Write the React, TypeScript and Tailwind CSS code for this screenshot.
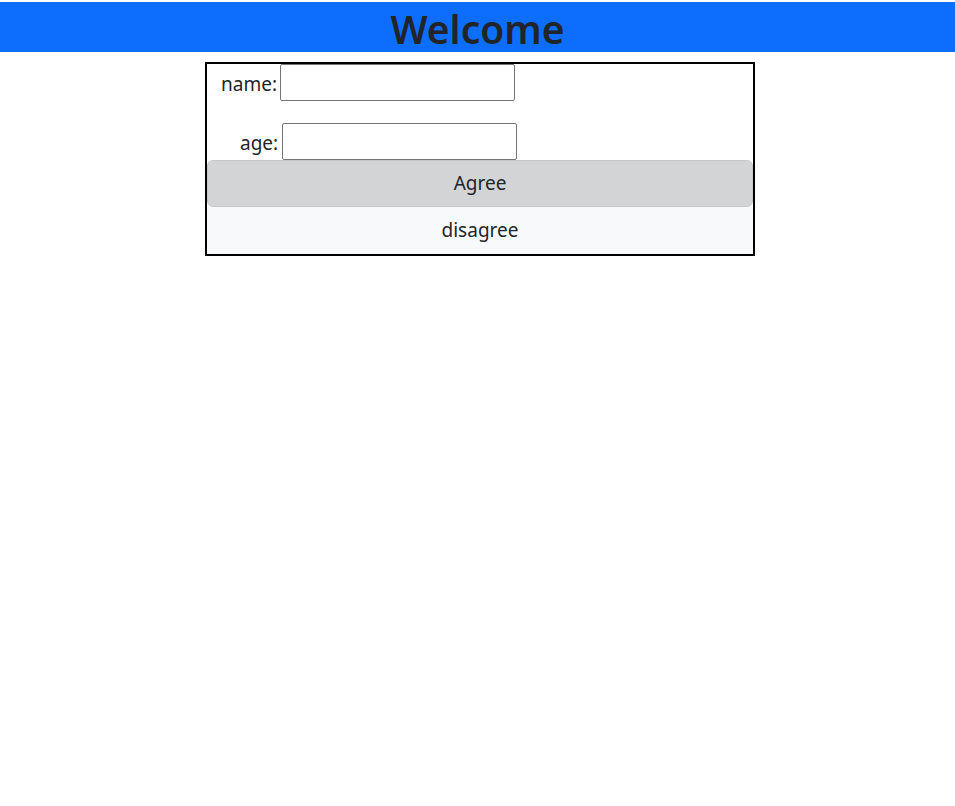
export default function App() {
  return (
    <div className="min-h-[806px] bg-white pt-[2px] text-[#212529]" style={{ fontFamily: '"Noto Sans", "Open Sans", sans-serif' }}>
      <header className="flex h-[50px] items-center justify-center bg-[#0d6efd]">
        <h1 className="pt-[2px] text-[39px] font-semibold leading-none">Welcome</h1>
      </header>
      <div className="ml-[205px] mt-[10px] w-[550px] border-2 border-black">
        <div className="flex items-center pl-[14px]">
          <label className="mr-[3px] pt-[3px] text-[19px]">name:</label>
          <input className="h-[37px] w-[235px] rounded-[2px] border border-[#767676]" />
        </div>
        <div className="mt-[22px] flex items-center pl-[33px]">
          <label className="mr-[4px] pt-[3px] text-[19px]">age:</label>
          <input className="h-[37px] w-[235px] rounded-[2px] border border-[#767676]" />
        </div>
        <button className="block h-[47px] w-full rounded-md border border-[#c6c7c8] bg-[#d3d4d5] text-[19px]">
          Agree
        </button>
        <button className="block h-[47px] w-full bg-[#f8f9fa] text-[19px]">disagree</button>
      </div>
    </div>
  );
}
